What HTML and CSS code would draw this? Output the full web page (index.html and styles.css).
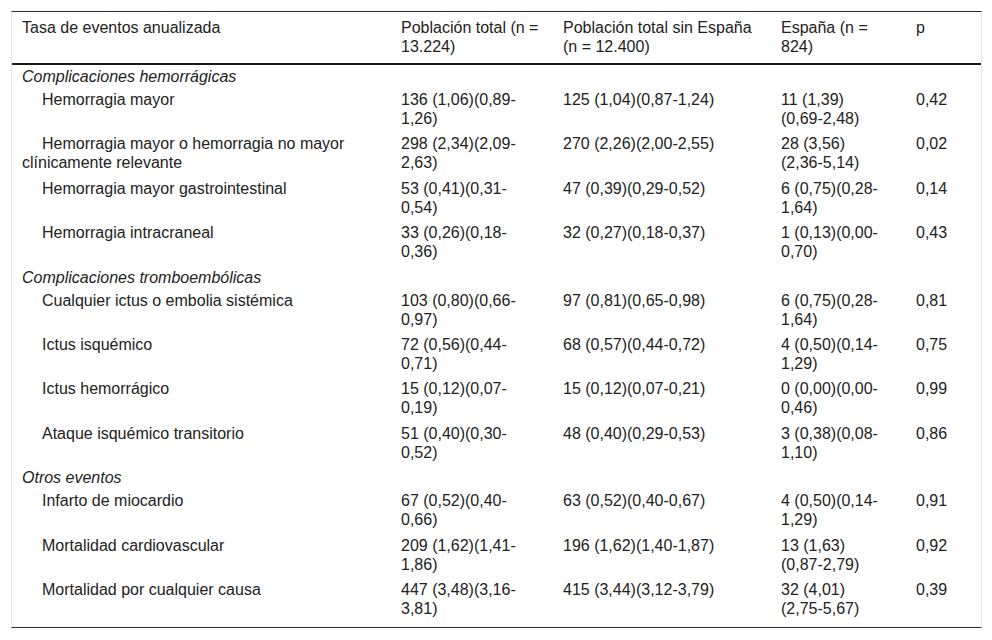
FILE: index.html
```html
<!DOCTYPE html>
<html lang="es">
<head>
<meta charset="utf-8">
<title>Tasa de eventos anualizada</title>
<link rel="stylesheet" href="styles.css">
</head>
<body>
<div class="wrap">
<table class="events">
<colgroup>
<col class="c1"><col class="c2"><col class="c3"><col class="c4"><col class="c5">
</colgroup>
<thead>
<tr>
<th>Tasa de eventos anualizada</th>
<th>Población total (n = 13.224)</th>
<th>Población total sin España (n = 12.400)</th>
<th>España (n = 824)</th>
<th>p</th>
</tr>
</thead>
<tbody>
<tr class="section"><td colspan="5">Complicaciones hemorrágicas</td></tr>
<tr><td>Hemorragia mayor</td><td>136 (1,06)(0,89-1,26)</td><td>125 (1,04)(0,87-1,24)</td><td>11 (1,39)(0,69-2,48)</td><td>0,42</td></tr>
<tr><td>Hemorragia mayor o hemorragia no mayor clínicamente relevante</td><td>298 (2,34)(2,09-2,63)</td><td>270 (2,26)(2,00-2,55)</td><td>28 (3,56)(2,36-5,14)</td><td>0,02</td></tr>
<tr><td>Hemorragia mayor gastrointestinal</td><td>53 (0,41)(0,31-0,54)</td><td>47 (0,39)(0,29-0,52)</td><td>6 (0,75)(0,28-1,64)</td><td>0,14</td></tr>
<tr><td>Hemorragia intracraneal</td><td>33 (0,26)(0,18-0,36)</td><td>32 (0,27)(0,18-0,37)</td><td>1 (0,13)(0,00-0,70)</td><td>0,43</td></tr>
<tr class="section"><td colspan="5">Complicaciones tromboembólicas</td></tr>
<tr><td>Cualquier ictus o embolia sistémica</td><td>103 (0,80)(0,66-0,97)</td><td>97 (0,81)(0,65-0,98)</td><td>6 (0,75)(0,28-1,64)</td><td>0,81</td></tr>
<tr><td>Ictus isquémico</td><td>72 (0,56)(0,44-0,71)</td><td>68 (0,57)(0,44-0,72)</td><td>4 (0,50)(0,14-1,29)</td><td>0,75</td></tr>
<tr><td>Ictus hemorrágico</td><td>15 (0,12)(0,07-0,19)</td><td>15 (0,12)(0,07-0,21)</td><td>0 (0,00)(0,00-0,46)</td><td>0,99</td></tr>
<tr><td>Ataque isquémico transitorio</td><td>51 (0,40)(0,30-0,52)</td><td>48 (0,40)(0,29-0,53)</td><td>3 (0,38)(0,08-1,10)</td><td>0,86</td></tr>
<tr class="section"><td colspan="5">Otros eventos</td></tr>
<tr><td>Infarto de miocardio</td><td>67 (0,52)(0,40-0,66)</td><td>63 (0,52)(0,40-0,67)</td><td>4 (0,50)(0,14-1,29)</td><td>0,91</td></tr>
<tr><td>Mortalidad cardiovascular</td><td>209 (1,62)(1,41-1,86)</td><td>196 (1,62)(1,40-1,87)</td><td>13 (1,63)(0,87-2,79)</td><td>0,92</td></tr>
<tr class="last"><td>Mortalidad por cualquier causa</td><td>447 (3,48)(3,16-3,81)</td><td>415 (3,44)(3,12-3,79)</td><td>32 (4,01)(2,75-5,67)</td><td>0,39</td></tr>
</tbody>
</table>
</div>
</body>
</html>
```

FILE: styles.css
```css
html, body {
  margin: 0;
  padding: 0;
  background: #fff;
}

.wrap {
  padding: 11px 0 0 11px;
}

.events {
  width: 971px;
  table-layout: fixed;
  border-collapse: separate;
  border-spacing: 0;
  border-top: 1px solid #2a2a2a;
  border-bottom: 1px solid #2a2a2a;
  border-left: 1px solid #e6e6e6;
  border-right: 1px solid #e6e6e6;
  font-family: "Liberation Sans", Arial, sans-serif;
  font-size: 16px;
  line-height: 19px;
  color: #222;
}

.c1 { width: 379px; }
.c2 { width: 162px; }
.c3 { width: 218px; }
.c4 { width: 135px; }
.c5 { width: 75px; }

.events th,
.events td {
  box-sizing: border-box;
  text-align: left;
  vertical-align: top;
  font-weight: normal;
  padding: 2px 10px 4.4px 10px;
}

.events th {
  padding-top: 6px;
  padding-bottom: 7px;
  border-bottom: 2px solid #1a1a1a;
}

.events th:nth-child(2),
.events td:nth-child(2) {
  padding-right: 12px;
}

.events th:nth-child(4),
.events td:nth-child(4) {
  padding-right: 24px;
}

.events tbody tr:not(.section) td:first-child {
  text-indent: 20px;
}

.events .section td {
  font-style: italic;
  padding-top: 2px;
  padding-bottom: 2px;
}

.events .last td {
  padding-bottom: 9px;
}
```
